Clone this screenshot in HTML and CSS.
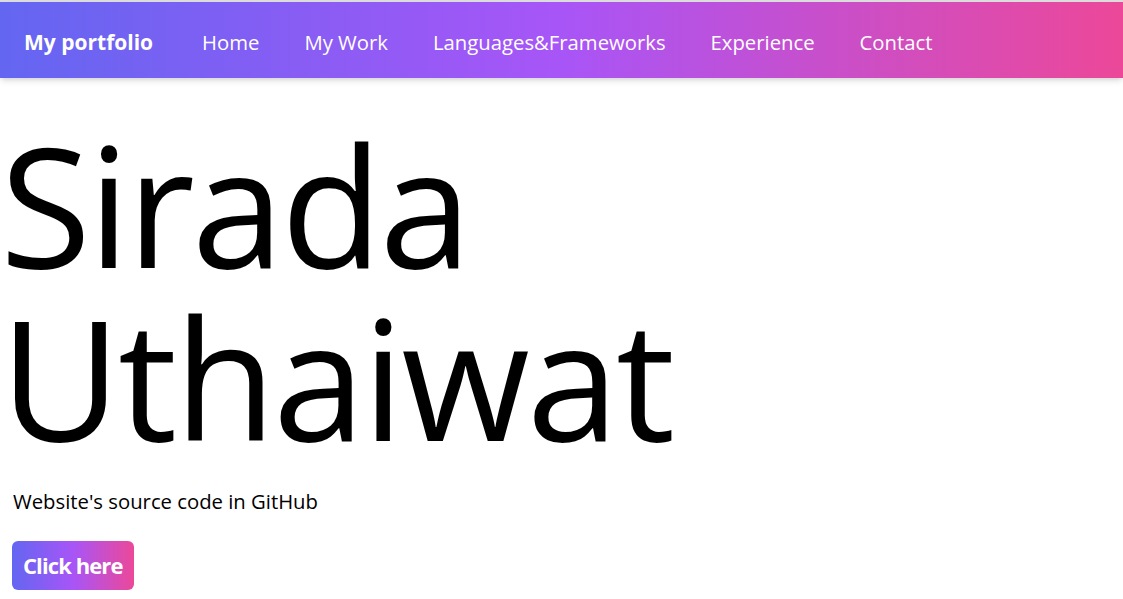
FILE: index.html
```html
<!DOCTYPE html>
<html lang="en">
<head>
<meta charset="utf-8">
<title>My portfolio</title>
<link rel="stylesheet" href="styles.css">
</head>
<body>
<div class="page">
  <nav class="navbar">
    <a class="brand" href="#">My portfolio</a>
    <ul class="nav-links">
      <li><a href="#">Home</a></li>
      <li><a href="#">My Work</a></li>
      <li><a href="#">Languages&amp;Frameworks</a></li>
      <li><a href="#">Experience</a></li>
      <li><a href="#">Contact</a></li>
    </ul>
  </nav>
  <main class="hero">
    <h1 class="hero-title">Sirada Uthaiwat</h1>
    <p class="hero-text">Website's source code in GitHub</p>
    <a class="btn" href="#">Click here</a>
  </main>
</div>
</body>
</html>
```
FILE: styles.css
```css
html, body {
  margin: 0;
  padding: 0;
  background: #ffffff;
}
body {
  font-family: "Open Sans", "Noto Sans", sans-serif;
  color: #000;
  overflow: hidden;
}
.page {
  border-top: 2px solid #dcdcdc;
  min-height: 597px;
}
.navbar {
  box-sizing: border-box;
  display: flex;
  align-items: center;
  height: 76px;
  padding: 3px 0 0 24px;
  background: linear-gradient(90deg, #6366f1 0%, #a855f7 50%, #ec4899 100%);
  box-shadow: 0 4px 6px -1px rgba(0,0,0,0.12), 0 2px 4px -2px rgba(0,0,0,0.1);
}
.brand {
  color: #fff;
  font-weight: 700;
  font-size: 21px;
  text-decoration: none;
  margin-right: 49px;
}
.nav-links {
  display: flex;
  gap: 45px;
  list-style: none;
  margin: 0;
  padding: 0;
}
.nav-links a {
  color: #fff;
  font-size: 20.3px;
  text-decoration: none;
}
.hero {
  display: flex;
  flex-direction: column;
  align-items: flex-start;
  padding-top: 40px;
}
.hero-title {
  margin: 0;
  font-weight: 400;
  font-size: 166px;
  line-height: 173px;
  letter-spacing: -3px;
}
.hero-text {
  margin: 23px 0 0 13px;
  font-size: 20.3px;
}
.btn {
  display: block;
  margin: 26px 0 0 12px;
  padding: 10px 11px;
  border-radius: 6px;
  background: linear-gradient(90deg, #6366f1 0%, #a855f7 50%, #ec4899 100%);
  color: #fff;
  font-weight: 700;
  font-size: 22px;
  line-height: 29px;
  letter-spacing: -0.9px;
  text-decoration: none;
}
```
